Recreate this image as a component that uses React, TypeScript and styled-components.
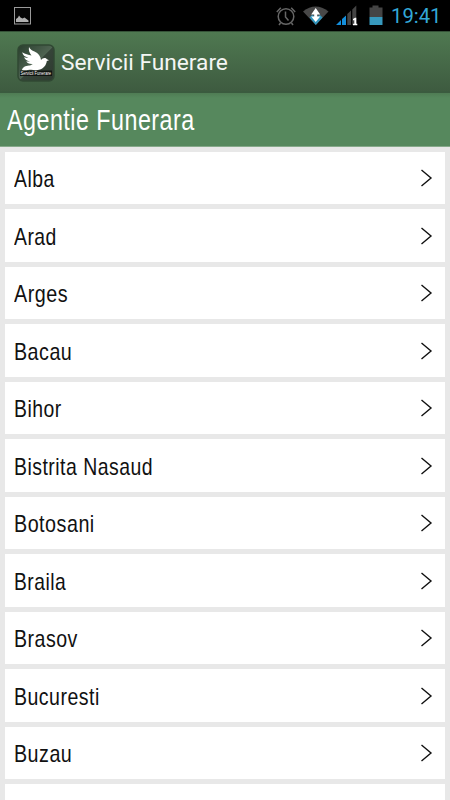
import React from 'react';
import styled, { createGlobalStyle } from 'styled-components';

const GlobalStyle = createGlobalStyle`
  * { box-sizing: border-box; }
  body { margin: 0; background: #e8e8e8; overflow: hidden; }
`;

const Screen = styled.div`
  width: 450px;
  height: 800px;
  overflow: hidden;
  display: flex;
  flex-direction: column;
  background: #e8e8e8;
  font-family: 'Liberation Sans', Arial, sans-serif;
`;

const StatusBar = styled.div`
  flex: none;
  height: 31px;
  display: flex;
  align-items: center;
  justify-content: space-between;
  padding: 0 9px 0 14px;
  background: #000;
`;

const StatusIcons = styled.div`
  display: flex;
  align-items: center;
`;

const Clock = styled.span`
  width: 50px;
  margin-left: 7px;
  padding-top: 2px;
  font: 400 20.3px/31px Roboto, sans-serif;
  color: #33a8d8;
  white-space: nowrap;
`;

const ActionBar = styled.header`
  flex: none;
  height: 62px;
  display: flex;
  align-items: center;
  gap: 6px;
  padding: 2px 0 0 17px;
  background: linear-gradient(#4f7951, #3e5b40);
  border-top: 1px solid #355238;
  border-bottom: 2px solid #3b5b3f;
`;

const AppName = styled.h1`
  margin: 0;
  padding-top: 1px;
  font: 400 22.7px/30px Roboto, sans-serif;
  color: #f4f6f4;
  white-space: nowrap;
`;

const Section = styled.div`
  flex: none;
  height: 54px;
  padding-left: 7px;
  background: linear-gradient(#4f7c54, #56885d 5px);
  border-bottom: 1px solid #86a98a;
  color: #fff;
  font-size: 29px;
  line-height: 55px;
`;

const Condensed = styled.span<{ $ratio: number }>`
  display: inline-block;
  white-space: nowrap;
  letter-spacing: 0.6px;
  transform-origin: 0 50%;
  transform: scaleX(${(p) => p.$ratio});
`;

const List = styled.ul`
  list-style: none;
  margin: 0;
  padding: 4.5px 5px 0;
  display: flex;
  flex-direction: column;
  gap: 5px;
`;

const Row = styled.li`
  flex: none;
  height: 52.5px;
  display: flex;
  align-items: center;
  justify-content: space-between;
  padding: 3px 12px 0 8.5px;
  background: #fff;
  color: #111;
  font-size: 24px;
  line-height: 52px;
`;

const Arrow = styled.svg`
  flex: none;
  margin-top: -2px;
`;

const counties: [string, number][] = [
  ['Alba', 0.806],
  ['Arad', 0.807],
  ['Arges', 0.822],
  ['Bacau', 0.82],
  ['Bihor', 0.808],
  ['Bistrita Nasaud', 0.81],
  ['Botosani', 0.822],
  ['Braila', 0.802],
  ['Brasov', 0.815],
  ['Bucuresti', 0.813],
  ['Buzau', 0.82],
  ['', 1],
];

const PictureIcon = () => (
  <svg width="17" height="31" viewBox="0 0 17 31">
    <rect x=".5" y="7.500" width="16" height="16.500" fill="#050505" stroke="#9a9a9a" />
    <path d="M2 22v-3l2-1.500 1-2 1.500 2 2 1 2-1 4 3V22z" fill="#b0b0b0" />
  </svg>
);

const StatusGlyphs = () => (
  <svg width="108" height="31" viewBox="276 0 108 31">
    <g fill="none" stroke="#666" strokeWidth="1.500">
      <circle cx="286" cy="16.500" r="7.800" />
      <path d="M285.500 11.500v5.500l3 3.500M276.800 12l4-4.200M291.200 7.800l4 4.200M280.500 23l-1.500 2M291.500 23l1.500 2" />
    </g>
    <path d="M303 11.500Q315.500 1.500 328.500 11.500L315.800 25z" fill="#484848" />
    <path d="M309.500 17.500l2.500-2.500 4 2 4-2 2.500 2.500-6.700 7.500z" fill="#3195bd" />
    <path d="M315.700 8l4.500 6.500h-3v2h3l-4.500 5.500-4.500-5.500h3v-2h-3z" fill="#fff" />
    <path d="M336 25l5-5v5zM342 19l4-3.500V25h-4z" fill="#148edb" />
    <path d="M347.300 14l3.700-3.500V25h-3.700zM352.300 9.500l4-4V25h-4z" fill="#444" />
    <path d="M353 19l2-1.300h1.300v6h1v1.500H353v-1.500h1.300v-3.800L353 20.500z" fill="#fff" />
    <path d="M369.500 7.500h3V5.500h6v2h4V17h-13z" fill="#444" />
    <path d="M369.500 17h13v8h-13z" fill="#3799bd" />
  </svg>
);

const LogoSvg = styled.svg`
  flex: none;
  overflow: visible;
`;

const LogoLabel = styled.text`
  font: 400 4.6px 'Liberation Sans', sans-serif;
  fill: #fff;
`;

const DoveLogo = () => (
  <LogoSvg width="38" height="38" viewBox="0 0 38 38">
    <defs>
      <linearGradient id="tile" x2="1" y2="1">
        <stop offset="0" stopColor="#293e2d" />
        <stop offset=".5" stopColor="#4e6351" />
        <stop offset=".52" stopColor="#354438" />
        <stop offset="1" stopColor="#2e3a30" />
      </linearGradient>
    </defs>
    <rect x="1" y="1" width="36" height="36" rx="5" fill="url(#tile)" stroke="#304833" strokeWidth="1.500" />
    <rect x="3" y="26.500" width="32" height="5.500" fill="#111612" />
    <path
      d="M12 3c1 2.300 3 3.500 5.500 4.500C21.500 9.200 23.500 12 24 16c1.500-2.300 4.500-2.800 6-.8l2 1-2.200.8c-.5 4-3 7.300-6.800 8.500-3 1-6 .6-9 .3-2.500-.2-5 1.200-9 .2.500-2.700 3.500-4.300 7-4.500 1.500 0 2.800-.6 3.800-1.500-3.300.3-5.600-.8-6.500-2.700 1.300.4 2.700.4 3.700.1-3.600-.7-5.400-2.500-5.800-4.500 1.300.7 3 .9 4.300.8C7.500 12.800 5.700 11 5.200 8.300c3 1.800 6 2.500 9.300 3.200C12.500 9 11.300 6 12 3z"
      fill="#fff"
    />
    <LogoLabel x="3.500" y="31" textLength="30.500" lengthAdjust="spacingAndGlyphs">Servicii Funerare</LogoLabel>
  </LogoSvg>
);

export default function App() {
  return (
    <>
      <GlobalStyle />
      <Screen>
        <StatusBar>
          <PictureIcon />
          <StatusIcons>
            <StatusGlyphs />
            <Clock>19:41</Clock>
          </StatusIcons>
        </StatusBar>
        <ActionBar>
          <DoveLogo />
          <AppName>Servicii Funerare</AppName>
        </ActionBar>
        <Section>
          <Condensed $ratio={0.803}>Agentie Funerara</Condensed>
        </Section>
        <List>
          {counties.map(([name, ratio], i) => (
            <Row key={i}>
              <Condensed $ratio={ratio}>{name}</Condensed>
              <Arrow width="14" height="18" viewBox="0 0 14 18">
                <path d="M2.500 1l9.500 8-9.500 8" fill="none" stroke="#111" strokeWidth="1.400" />
              </Arrow>
            </Row>
          ))}
        </List>
      </Screen>
    </>
  );
}
